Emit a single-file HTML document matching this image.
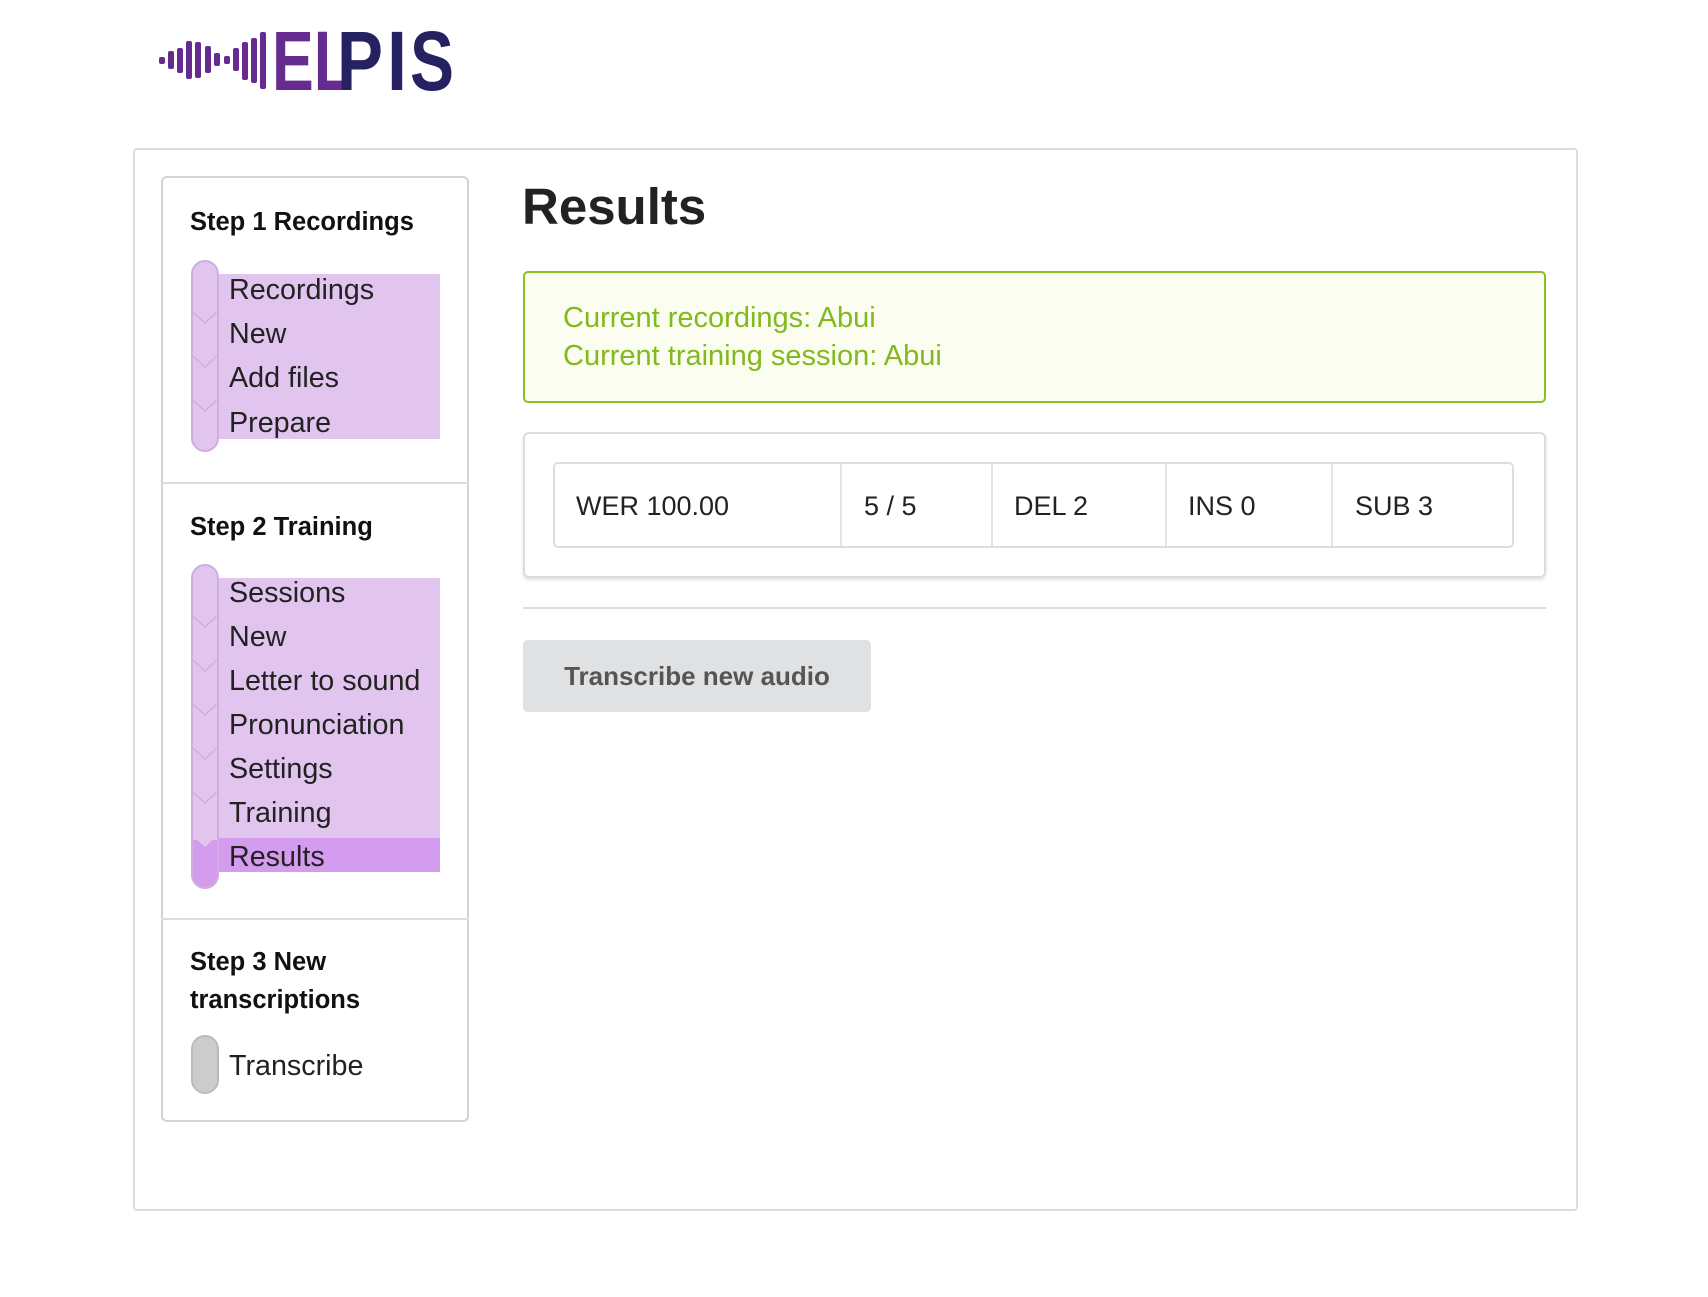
<!DOCTYPE html>
<html><head><meta charset="utf-8"><style>
*{margin:0;padding:0;box-sizing:border-box}
body{width:1708px;height:1297px;background:#fff;font-family:"Liberation Sans",sans-serif;color:#222;position:relative;overflow:hidden}
.a{position:absolute}
.item{position:absolute;left:229px;font-size:28.7px;color:#222;line-height:30px}
.title{position:absolute;left:190px;font-size:25.5px;font-weight:bold;color:#111;line-height:38px}
</style></head><body>
<!-- logo -->
<svg class="a" style="left:158px;top:24px" width="310" height="72" viewBox="0 0 310 72">
<g fill="#652b8f">
<rect x="1" y="33" width="6" height="7" rx="2"/>
<rect x="10" y="27" width="6" height="18" rx="2"/>
<rect x="19" y="24" width="6" height="25" rx="2"/>
<rect x="28" y="17" width="6" height="38" rx="2"/>
<rect x="37" y="18" width="6" height="36" rx="2"/>
<rect x="47" y="22" width="6" height="27" rx="2"/>
<rect x="56" y="29" width="6" height="13" rx="2"/>
<rect x="66" y="32" width="6" height="8" rx="2"/>
<rect x="75" y="24" width="6" height="23" rx="2"/>
<rect x="84" y="18" width="6" height="38" rx="2"/>
<rect x="93" y="14" width="6" height="45" rx="2"/>
<rect x="102" y="8" width="6" height="57" rx="2"/>
</g>
<text x="114" y="66" font-family="Liberation Sans" font-weight="bold" font-size="84" fill="#652b8f" textLength="80" lengthAdjust="spacingAndGlyphs">EL</text>
<text x="179" y="66" font-family="Liberation Sans" font-weight="bold" font-size="84" fill="#262262" textLength="46" lengthAdjust="spacingAndGlyphs">P</text>
<text x="229" y="66" font-family="Liberation Sans" font-weight="bold" font-size="84" fill="#262262" textLength="20" lengthAdjust="spacingAndGlyphs">I</text>
<text x="252" y="66" font-family="Liberation Sans" font-weight="bold" font-size="84" fill="#262262" textLength="44" lengthAdjust="spacingAndGlyphs">S</text>
</svg>
<!-- outer -->
<div class="a" style="left:133px;top:148px;width:1445px;height:1063px;border:2px solid #ddd;border-radius:4px"></div>
<!-- sidebar -->
<div class="a" style="left:161px;top:176px;width:308px;height:946px;border:2px solid #d4d4d4;border-radius:6px"></div>
<div class="a" style="left:161px;top:482px;width:308px;height:2px;background:#ddd"></div>
<div class="a" style="left:161px;top:918px;width:308px;height:2px;background:#ddd"></div>

<div class="title" style="top:203px">Step 1 Recordings</div>
<div class="a" style="left:219px;top:274px;width:221px;height:165px;background:#e1c5ee"></div>
<div class="a" style="left:191px;top:260px;width:28px;height:192px;background:#e1c5ee;border:2px solid #cfaede;border-radius:14px"></div>
<svg class="a" style="left:191px;top:260px" width="28" height="192"><g stroke="#cdb0dc" stroke-width="1.5" fill="none"><path d="M2 52 L14 63 L26 52"/><path d="M2 96 L14 107 L26 96"/><path d="M2 140 L14 151 L26 140"/></g></svg>
<div class="item" style="top:275px">Recordings</div>
<div class="item" style="top:319px">New</div>
<div class="item" style="top:363px">Add files</div>
<div class="item" style="top:408px">Prepare</div>

<div class="title" style="top:508px">Step 2 Training</div>
<div class="a" style="left:219px;top:578px;width:221px;height:261px;background:#e1c5ee"></div>
<div class="a" style="left:219px;top:838px;width:221px;height:34px;background:#d49cee"></div>
<div class="a" style="left:191px;top:564px;width:28px;height:325px;background:linear-gradient(#e1c5ee 0,#e1c5ee 274px,#d49cee 274px);border:2px solid #cfaede;border-radius:14px"></div>
<svg class="a" style="left:191px;top:564px" width="28" height="325"><g stroke="#cdb0dc" stroke-width="1.5" fill="none"><path d="M2 52 L14 63 L26 52"/><path d="M2 96 L14 107 L26 96"/><path d="M2 140 L14 151 L26 140"/><path d="M2 184 L14 195 L26 184"/><path d="M2 228 L14 239 L26 228"/></g><path d="M2 272 L14 283 L26 272 L26 262 L2 262Z" fill="#e1c5ee"/></svg>
<div class="item" style="top:578px">Sessions</div>
<div class="item" style="top:622px">New</div>
<div class="item" style="top:666px">Letter to sound</div>
<div class="item" style="top:710px">Pronunciation</div>
<div class="item" style="top:754px">Settings</div>
<div class="item" style="top:798px">Training</div>
<div class="item" style="top:842px">Results</div>

<div class="title" style="top:943px">Step 3 New<br>transcriptions</div>
<div class="a" style="left:191px;top:1035px;width:28px;height:59px;background:#ccc;border:2px solid #bbb;border-radius:14px"></div>
<div class="item" style="top:1051px">Transcribe</div>

<!-- main -->
<div class="a" style="left:522px;top:175px;font-size:51px;font-weight:bold;color:#222;line-height:64px">Results</div>
<div class="a" style="left:523px;top:271px;width:1023px;height:132px;background:#fbfdf0;border:2px solid #8cbf26;border-radius:5px"></div>
<div class="a" style="left:563px;top:299px;font-size:29px;color:#82b91e;line-height:38px">Current recordings: Abui<br>Current training session: Abui</div>

<div class="a" style="left:523px;top:432px;width:1023px;height:146px;border:2px solid #ddd;border-radius:6px;box-shadow:0 2px 3px rgba(0,0,0,.12)"></div>
<div class="a" style="left:553px;top:462px;width:961px;height:86px;border:2px solid #ddd;border-radius:5px"></div>
<div class="a" style="left:840px;top:464px;width:2px;height:82px;background:#e4e4e4"></div>
<div class="a" style="left:991px;top:464px;width:2px;height:82px;background:#e4e4e4"></div>
<div class="a" style="left:1165px;top:464px;width:2px;height:82px;background:#e4e4e4"></div>
<div class="a" style="left:1331px;top:464px;width:2px;height:82px;background:#e4e4e4"></div>
<div class="a" style="left:576px;top:491px;font-size:27px;line-height:30px">WER 100.00</div>
<div class="a" style="left:864px;top:491px;font-size:27px;line-height:30px">5 / 5</div>
<div class="a" style="left:1014px;top:491px;font-size:27px;line-height:30px">DEL 2</div>
<div class="a" style="left:1188px;top:491px;font-size:27px;line-height:30px">INS 0</div>
<div class="a" style="left:1355px;top:491px;font-size:27px;line-height:30px">SUB 3</div>

<div class="a" style="left:523px;top:607px;width:1023px;height:2px;background:#ddd"></div>
<div class="a" style="left:523px;top:640px;width:348px;height:72px;background:#e0e1e2;border-radius:5px;font-size:26px;font-weight:bold;color:#555;text-align:center;line-height:72px">Transcribe new audio</div>
</body></html>
